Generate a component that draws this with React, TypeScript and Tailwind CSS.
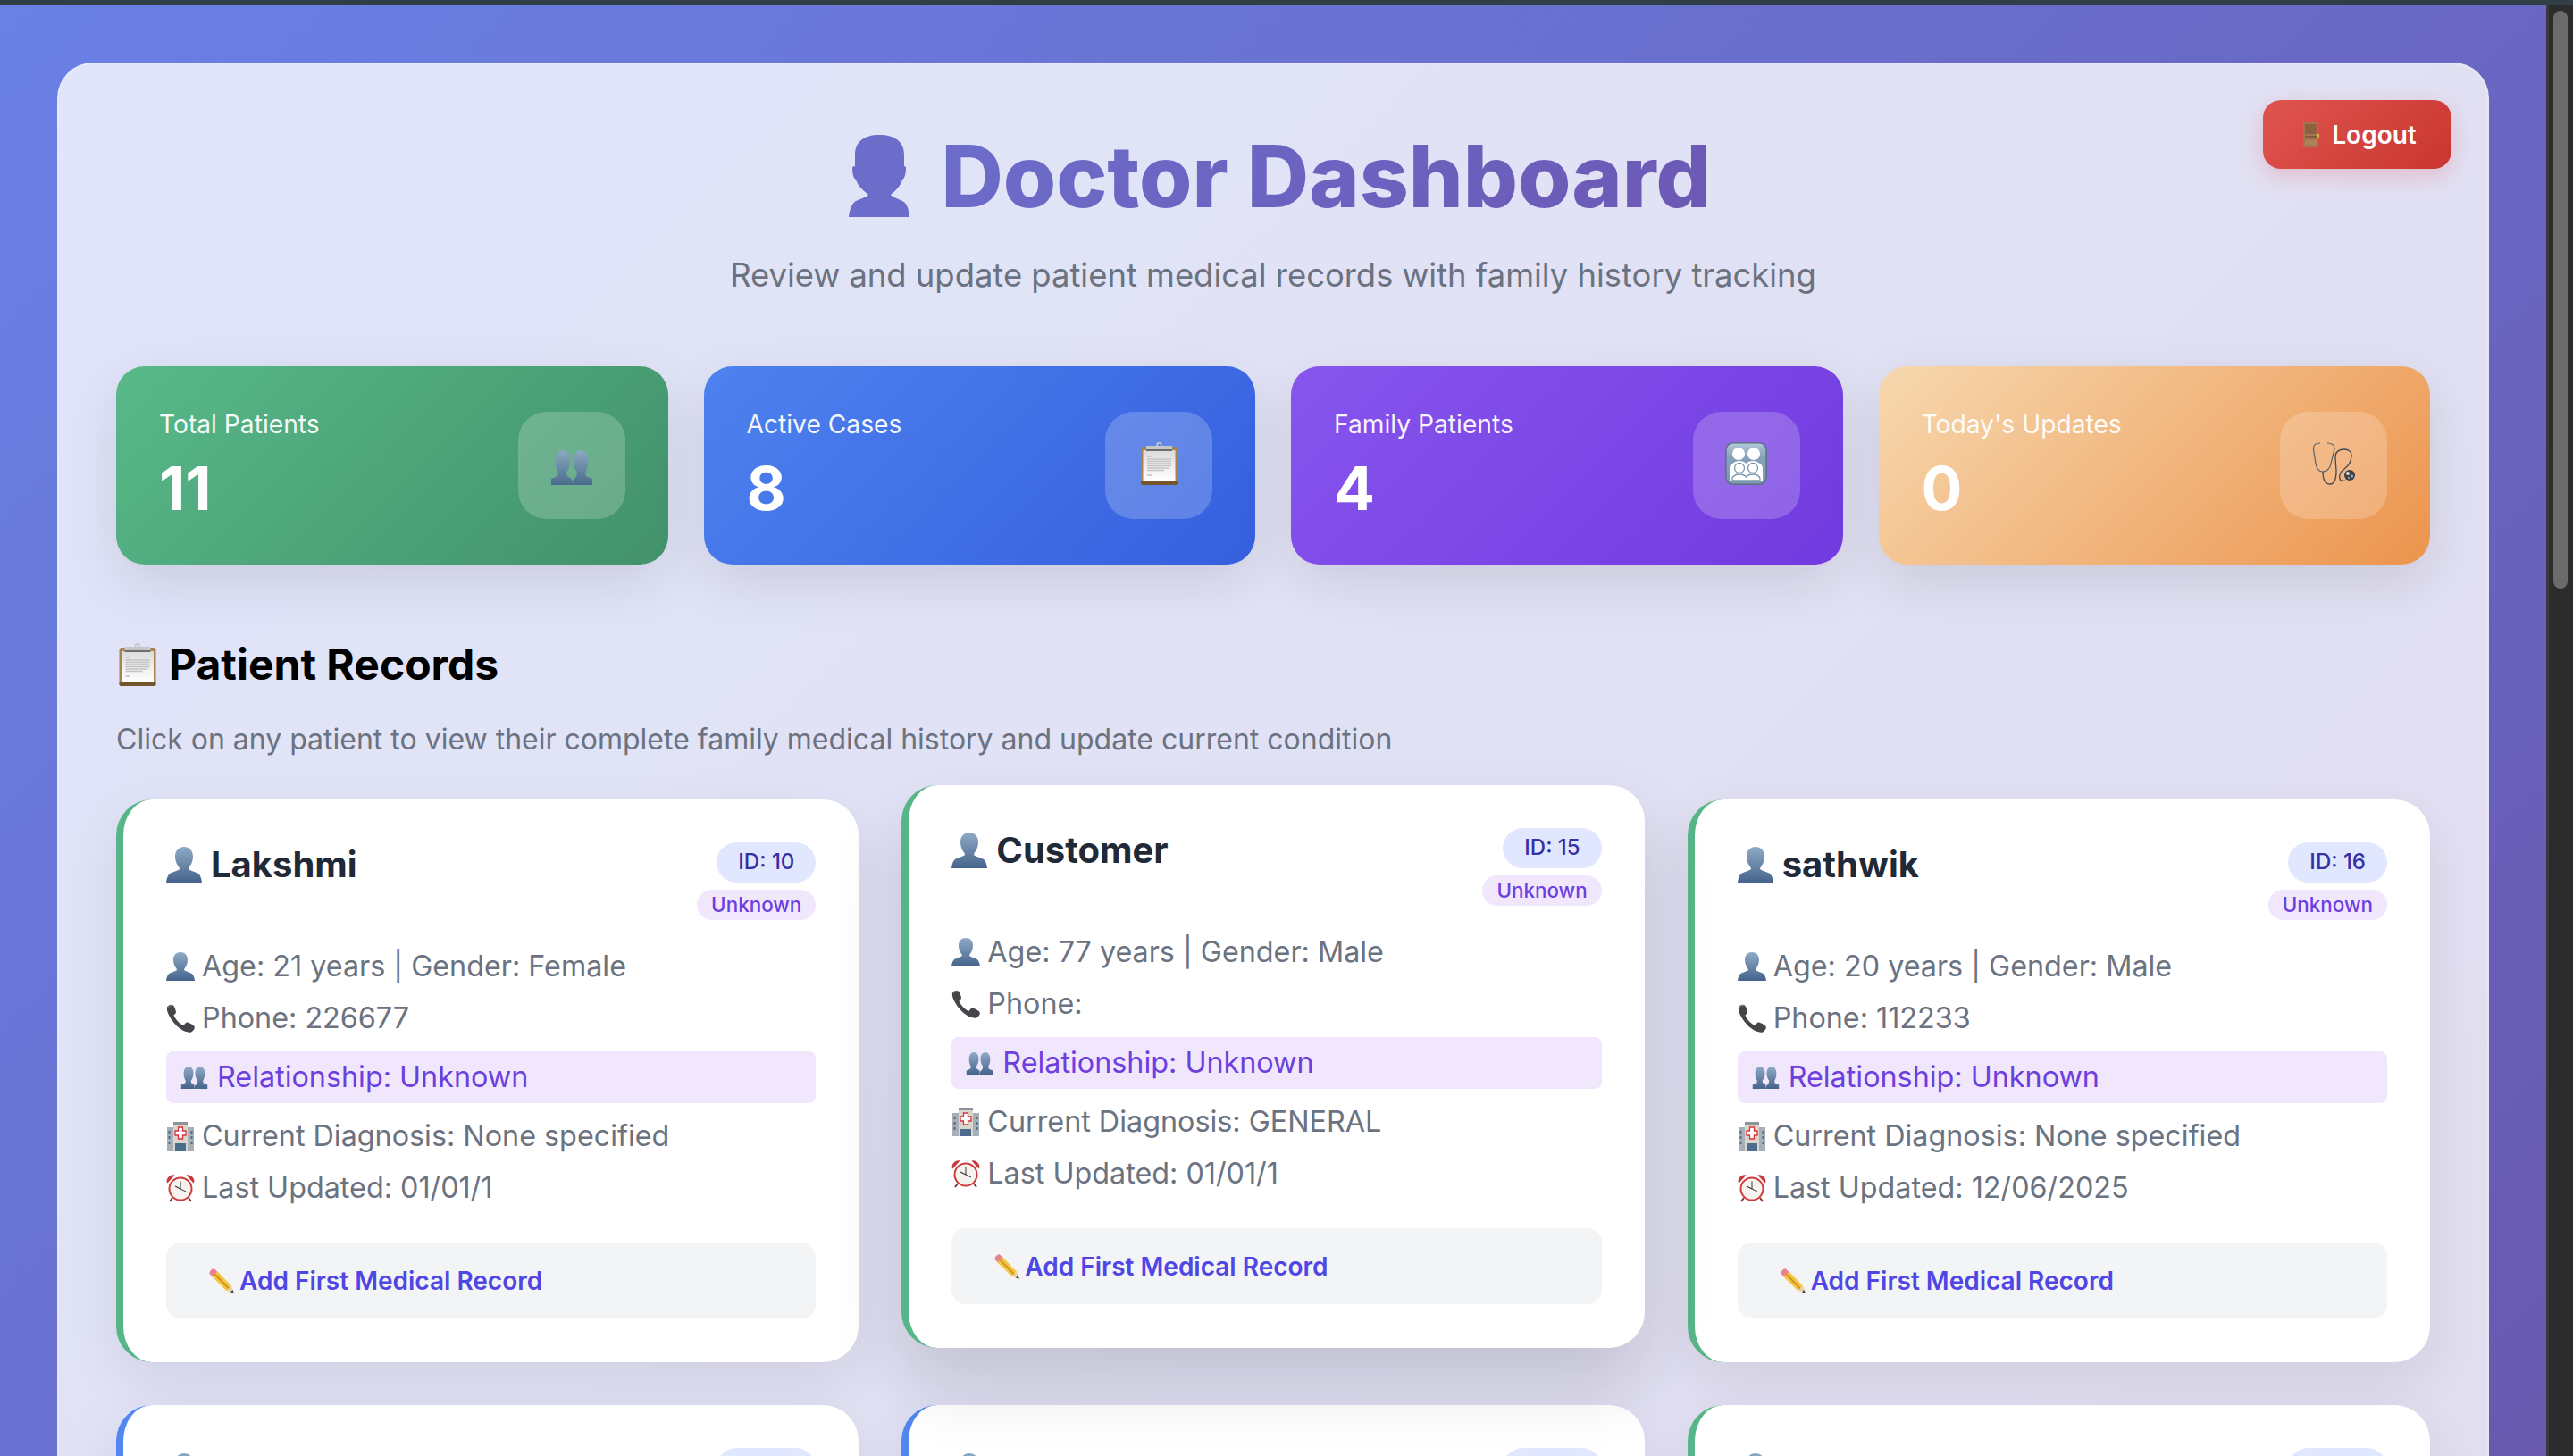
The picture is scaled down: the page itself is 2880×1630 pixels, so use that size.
const BustPath = "M20 0C26 0 30 4 30 11C30 16 28 20 25.5 23L25 25C27 27 33 28 36 30C38 31.5 39.5 35 40 40L0 40C.5 35 2 31.5 4 30C7 28 13 27 15 25L14.5 23C12 20 10 16 10 11C10 4 14 0 20 0Z";

const BustGrad = ({ id }: { id: string }) => (
  <defs>
    <linearGradient id={id} x1="0" y1="0" x2="0" y2="1">
      <stop offset="0" stopColor="#8eaac6" />
      <stop offset="1" stopColor="#46648c" />
    </linearGradient>
  </defs>
);

const Bust = ({ className }: { className: string }) => (
  <svg viewBox="0 0 40 40" className={className}>
    <BustGrad id="bust" />
    <path d={BustPath} fill="url(#bust)" />
  </svg>
);

const TitleBust = () => (
  <svg viewBox="0 0 68 92" className="w-[68px] h-[92px] shrink-0">
    <path
      d="M34 0C52 0 62 8 62 22L62 35L64 36C64 42 63 49 60 50C58 57 53 62 47 67L49 69L60 74C66 77 67 84 68 92L0 92C1 84 3 77 8 74L20 69L22 67C16 62 10 57 8 50C5 49 4 42 4 36L7 35L7 22C7 8 17 0 34 0Z"
      fill="#6c6dcb"
    />
  </svg>
);

const Busts = ({ className }: { className: string }) => (
  <svg viewBox="0 0 46 39" className={className}>
    <BustGrad id="busts" />
    <path d="M13 0C18 0 21.500 5 21.500 12C21.500 17 19 22 17 25L18 29L23 32L23 39L0 39L0 32L7 29L8 25C6 22 4.500 17 4.500 12C4.500 5 8 0 13 0Z" fill="url(#busts)" />
    <path d="M33 0C38 0 41.500 5 41.500 12C41.500 17 40 22 38 25L39 29L46 32L46 39L23 39C23 35 24 33 27 31L28 29L29 25C27 22 24.500 17 24.500 12C24.500 5 28 0 33 0Z" fill="url(#busts)" />
  </svg>
);

const Clipboard = ({ className }: { className: string }) => (
  <svg viewBox="0 0 41 48" className={className}>
    <defs>
      <linearGradient id="paper" x1="0" y1="0" x2="0" y2="1">
        <stop offset="0" stopColor="#dcdcdc" />
        <stop offset="1" stopColor="#ffffff" />
      </linearGradient>
    </defs>
    <rect x="0" y="5" width="41" height="43" rx="2.5" fill="#a9834e" />
    <rect x="0" y="43" width="41" height="5" rx="2" fill="#74552c" />
    <rect x="2.500" y="9" width="36" height="34.500" fill="url(#paper)" />
    <path d="M7 16H12M7 19H34M7 21.500H34M7 24H34M7 26.500H34M7 29H32M7 31.500H26M7 37H12" stroke="#c2c2c2" strokeWidth="1.400" />
    <rect x="6" y="4" width="29" height="6" rx="1" fill="#c4c6c8" />
    <rect x="6" y="8" width="29" height="2" fill="#6e6e6e" />
    <circle cx="20.500" cy="3" r="2.400" fill="none" stroke="#c4c6c8" strokeWidth="1.600" />
  </svg>
);

const Family = ({ className }: { className: string }) => (
  <svg viewBox="0 0 47 48" className={className}>
    <defs>
      <linearGradient id="fam" x1="0" y1="0" x2="0" y2="1">
        <stop offset="0" stopColor="#b4c8d6" />
        <stop offset="0.35" stopColor="#86a2ba" />
        <stop offset="1" stopColor="#7d97ae" />
      </linearGradient>
    </defs>
    <rect x="0.800" y="0.800" width="45.400" height="46.400" rx="8" fill="url(#fam)" stroke="#5c7186" strokeWidth="1.600" />
    <circle cx="15" cy="13" r="7" fill="#fff" />
    <circle cx="32" cy="13" r="7" fill="#fff" />
    <path d="M5 43V29C5 25 10 22 15 21C19 21 22 22 23.500 24C25 22 28 21 32 21C37 22 42 25 42 29V43Z" fill="#fff" />
    <circle cx="16" cy="29" r="5.500" fill="#fff" stroke="#7d97ae" strokeWidth="1.300" />
    <circle cx="31" cy="29" r="5.500" fill="#fff" stroke="#7d97ae" strokeWidth="1.300" />
    <path d="M8 43V41C8 38 12 36 16 36C19 36 22 37 23.500 39C25 37 28 36 31 36C35 36 39 38 39 41V43Z" fill="#fff" stroke="#7d97ae" strokeWidth="1.300" />
  </svg>
);

const Stethoscope = ({ className }: { className: string }) => (
  <svg viewBox="0 0 48 48" className={className} fill="none">
    <path d="M9 1C4 1 1 3 1.500 8L4 24C5 30 8 33 12 33C16 33 20 30 21 24L25 8C25.500 3 22 1 17 1" stroke="#5a5f65" strokeWidth="1.200" />
    <path d="M12 33C12 42 15 47 20 47C26 47 27 40 27 32L26 17C26 11 30 8 36 8C41 8 44 11 44 15C44 22 40 27 36 30C32 33 30 37 31 41C32 44 34 44 37 43" stroke="#44494e" strokeWidth="1.300" />
    <circle cx="42" cy="37" r="6" fill="#3c4249" />
    <circle cx="40" cy="35" r="2" fill="#d5dae0" />
    <circle cx="44.500" cy="38" r="1.600" fill="#aab2ba" />
    <circle cx="41" cy="40" r="1.200" fill="#8b939b" />
  </svg>
);

const Door = () => (
  <svg viewBox="0 0 18 28" className="w-[18px] h-[28px] shrink-0">
    <rect width="17" height="28" fill="#a57550" />
    <rect x="2" y="2" width="13" height="11" fill="#8f6040" />
    <rect x="2" y="15" width="13" height="3" fill="#86593b" />
    <rect x="2" y="20" width="13" height="5" fill="#b08058" />
    <rect x="15.500" y="13" width="2.500" height="4" fill="#d8b13c" />
  </svg>
);

const Phone = ({ className }: { className: string }) => (
  <svg viewBox="0 0 32 32" className={className}>
    <path d="M1 3.500C2.500 1 6 0 8 1.500C9.500 3 10.500 6.500 11 9C11 10.500 9.500 11.500 8.500 12.500C9.500 16 15 22.500 19.500 24C20.500 23 21.500 21 23 20.500C25.500 20.500 30 23 31.500 25C32.500 27 31 30 28 31.500C24 32.500 16 29.500 10 22.500C4 16 0 8.500 1 3.500Z" fill="#444649" />
    <path d="M2 4C3 2 6 1 7.500 2" stroke="#85888c" strokeWidth="1" fill="none" />
  </svg>
);

const Hospital = ({ className }: { className: string }) => (
  <svg viewBox="0 0 32 32" className={className}>
    <rect x="1" y="6" width="30" height="26" fill="#a9afb6" />
    <rect x="8" y="0" width="16" height="32" fill="#d9d5cf" />
    <rect x="8" y="0" width="16" height="3" fill="#8d9298" />
    <path d="M13.500 6H18.500V10H22V15H18.500V19H13.500V15H10V10H13.500Z" fill="#fff" stroke="#d8333a" strokeWidth="1.300" />
    <rect x="10" y="24" width="12" height="8" fill="#4b6c8c" />
    <path d="M3.500 10V13M3.500 16V19M3.500 22V25M28.500 10V13M28.500 16V19M28.500 22V25" stroke="#4b6c8c" strokeWidth="2" />
  </svg>
);

const AlarmClock = ({ className }: { className: string }) => (
  <svg viewBox="0 0 32 32" className={className}>
    <path d="M0.500 9C0.500 4 5 0.500 9.500 1.500L1.500 10.500ZM31.500 9C31.500 4 27 0.500 22.500 1.500L30.500 10.500Z" fill="#c9393c" />
    <path d="M7 27L4 31M25 27L28 31" stroke="#8f2a2c" strokeWidth="2" />
    <circle cx="16" cy="17" r="13.500" fill="#cf3a3d" />
    <circle cx="16" cy="17" r="11.500" fill="#f6f3ef" />
    <path d="M16 17L16 8.500M16 17L22 20" stroke="#333" strokeWidth="1" />
    <path d="M16 17L10 14" stroke="#333" strokeWidth="1.200" />
  </svg>
);

const Pencil = () => (
  <svg viewBox="0 0 28 28" className="w-[28px] h-[28px] shrink-0">
    <path d="M6 0.500L11.500 6L6 11.500L0.500 6C-0.500 4 4 -0.500 6 0.500Z" fill="#e8808e" />
    <path d="M9.500 3.500L25 19.500L19.500 25L3.500 9.500Z" fill="#f5c63e" />
    <path d="M6.500 6.500L22 22.500" stroke="#cc952c" strokeWidth="2" />
    <path d="M25 19.500L27.800 27.800L19.500 25Z" fill="#eccfa4" />
    <path d="M26.500 24L27.800 27.800L24 26.500Z" fill="#444" />
  </svg>
);

const stats = [
  { label: "Total Patients", value: "11", bg: "bg-[linear-gradient(135deg,#58b989,#42916a)]", icon: <Busts className="w-[46px] h-[39px] mt-[5px] opacity-90" /> },
  { label: "Active Cases", value: "8", bg: "bg-[linear-gradient(135deg,#4e82ef,#355fde)]", icon: <Clipboard className="w-[41px] h-[48px] mt-[-4px]" /> },
  { label: "Family Patients", value: "4", bg: "bg-[linear-gradient(135deg,#8755ee,#713adf)]", icon: <Family className="w-[47px] h-[48px] mt-[-4px]" /> },
  { label: "Today's Updates", value: "0", bg: "bg-[linear-gradient(135deg,#f7d8af,#ec944d)]", icon: <Stethoscope className="w-[48px] h-[48px] mt-[-4px]" /> },
];

const patients = [
  { name: "Lakshmi", id: 10, age: "21", gender: "Female", phone: "226677", diagnosis: "None specified", updated: "01/01/1", hover: false },
  { name: "Customer", id: 15, age: "77", gender: "Male", phone: "", diagnosis: "GENERAL", updated: "01/01/1", hover: true },
  { name: "sathwik", id: 16, age: "20", gender: "Male", phone: "112233", diagnosis: "None specified", updated: "12/06/2025", hover: false },
];

const Line = ({ icon, children }: { icon: React.ReactNode; children: React.ReactNode }) => (
  <p className="flex items-center gap-[8px] h-[58px] text-[32.3px] text-[#6b7280]">
    {icon}
    <span>{children}</span>
  </p>
);

const icon32 = "w-[32px] h-[32px] shrink-0";

type Patient = (typeof patients)[number];

const PatientCard = ({ p }: { p: Patient }) => (
  <div
    className={`h-[630px] bg-white rounded-[40px] border-l-[8px] border-[#57b687] pt-[48px] pr-[48px] pl-[48px] ${
      p.hover
        ? "-translate-y-4 shadow-[0_40px_80px_rgba(0,0,0,0.14)]"
        : "shadow-[0_20px_60px_rgba(0,0,0,0.08)]"
    }`}
  >
    <div className="flex justify-between items-start h-[87px]">
      <div className="flex items-center gap-[10px] h-[50px]">
        <Bust className="w-[40px] h-[40px] shrink-0" />
        <h3 className="text-[40px] font-bold text-[#1f2937] leading-[50px]">{p.name}</h3>
      </div>
      <div className="flex flex-col items-end gap-[8px]">
        <span className="h-[45px] px-[24px] rounded-full bg-[#e0e7ff] text-[#3730a3] text-[24px] font-medium leading-[44px]">
          ID: {p.id}
        </span>
        <span className="h-[34px] px-[16px] rounded-full bg-[#f0e7fc] text-[#6d3ee0] text-[22.400px] font-medium leading-[33px]">
          Unknown
        </span>
      </div>
    </div>
    <div className="mt-[23px]">
      <Line icon={<Bust className={icon32} />}>Age: {p.age} years | Gender: {p.gender}</Line>
      <Line icon={<Phone className={icon32} />}>Phone: {p.phone}</Line>
      <div className="flex items-center gap-[10px] h-[58px] my-[8px] pl-[16px] rounded-[8px] bg-[#f0e7fc] text-[32.3px] text-[#6d3ee0]">
        <Busts className="w-[31px] h-[25px] shrink-0" />
        <span>Relationship: Unknown</span>
      </div>
      <Line icon={<Hospital className={icon32} />}>Current Diagnosis: {p.diagnosis}</Line>
      <Line icon={<AlarmClock className={icon32} />}>Last Updated: {p.updated}</Line>
    </div>
    <button className="mt-[32px] w-full h-[85px] flex items-center gap-[6px] pl-[48px] rounded-[16px] bg-[#f3f4f6] text-[#4f46e5] text-[28px] font-semibold">
      <Pencil />
      Add First Medical Record
    </button>
  </div>
);

// the next row only shows its top edge above the fold
const NextRowCard = ({ border }: { border: string }) => (
  <div className={`h-[630px] bg-white rounded-[40px] border-l-[8px] ${border} pt-[48px] pr-[48px] pl-[48px] shadow-[0_20px_60px_rgba(0,0,0,0.08)]`}>
    <div className="flex justify-between items-start">
      <Bust className="w-[40px] h-[40px] mt-[6px]" />
      <span className="w-[111px] h-[45px] rounded-full bg-[#e0e7ff]" />
    </div>
  </div>
);

export default function App() {
  return (
    <div className="h-[1630px] overflow-hidden flex flex-col font-['Inter',sans-serif] bg-[#2c2c2c]">
      <div className="h-[6px] shrink-0 bg-[#2f3f45]" />
      <div className="flex flex-1 min-h-0">
        <div className="flex-1 min-w-0 overflow-hidden">
          <div className="h-[3740px] p-[64px] bg-[linear-gradient(135deg,#6a80e5,#684696)]">
            <div className="relative h-full bg-white/80 border-2 border-white/20 rounded-[40px] p-[64px]">
              <button className="absolute top-[40px] right-[40px] w-[211px] h-[77px] flex items-center justify-center gap-[14px] pl-[6px] rounded-[20px] bg-[linear-gradient(135deg,#e05450,#c8362e)] text-white text-[28px] font-semibold shadow-[0_8px_24px_rgba(229,62,62,0.22)]">
                <Door />
                Logout
              </button>

              <h1 className="flex items-center justify-center gap-[35px] pl-[15px] text-[96px] font-extrabold leading-[122px]">
                <TitleBust />
                <span className="bg-[linear-gradient(135deg,#6c6dcb,#6c58b4)] bg-clip-text text-transparent">
                  Doctor Dashboard
                </span>
              </h1>
              <p className="mt-[28px] text-center text-[36.4px] leading-[44px] text-[#6b7280]">
                Review and update patient medical records with family history tracking
              </p>

              <div className="mt-[80px] grid grid-cols-4 gap-[40px]">
                {stats.map((s) => (
                  <div
                    key={s.label}
                    className={`h-[222px] flex items-center justify-between px-[48px] rounded-[32px] shadow-[0_20px_60px_rgba(0,0,0,0.1)] ${s.bg}`}
                  >
                    <div className="-mt-[4px]">
                      <p className="text-[28.200px] leading-[36px] text-white/95">{s.label}</p>
                      <p className="mt-[17px] text-[68px] leading-[72px] font-bold text-white">{s.value}</p>
                    </div>
                    <div className="w-[120px] h-[120px] flex items-center justify-center rounded-[32px] bg-white/20">
                      {s.icon}
                    </div>
                  </div>
                ))}
              </div>

              <h2 className="mt-[82px] flex items-center gap-[14px] text-[48px] leading-[60px] font-bold text-black">
                <Clipboard className="w-[42px] h-[48px] ml-[3px] shrink-0" />
                Patient Records
              </h2>
              <p className="mt-[34px] text-[32px] leading-[40px] text-[#6b7280]">
                Click on any patient to view their complete family medical history and update current condition
              </p>

              <div className="mt-[47px] grid grid-cols-3 gap-[48px]">
                {patients.map((p) => (
                  <PatientCard key={p.id} p={p} />
                ))}
                <NextRowCard border="border-[#5286f0]" />
                <NextRowCard border="border-[#5286f0]" />
                <NextRowCard border="border-[#57b687]" />
              </div>
            </div>
          </div>
        </div>
        <div className="w-[30px] shrink-0 bg-[#2c2c2c] border-l-[3px] border-[#3a3a3a] pl-[5px] pt-[6px]">
          <div className="w-[16px] h-[647px] rounded-full bg-[#6b6b6b]" />
        </div>
      </div>
    </div>
  );
}
